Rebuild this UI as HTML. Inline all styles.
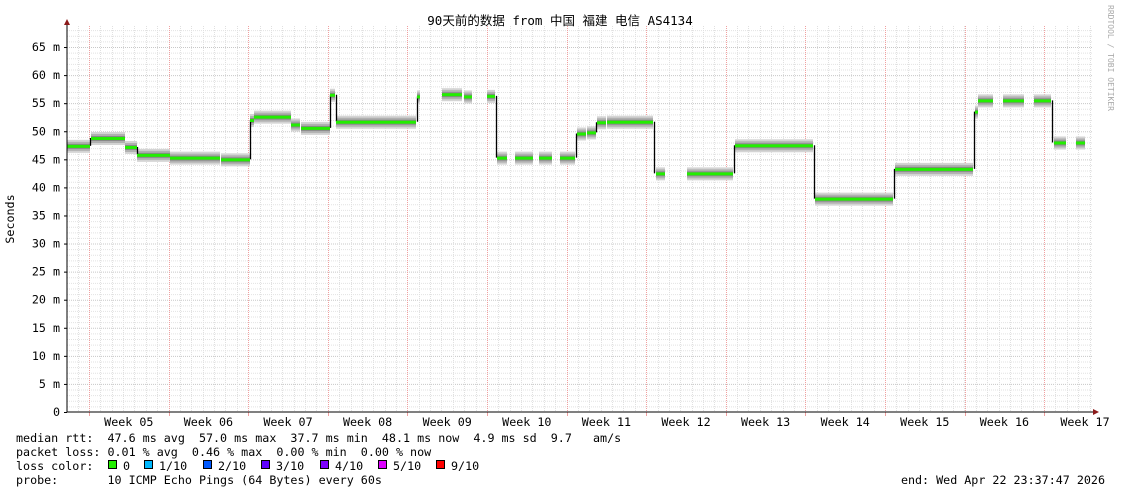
<!DOCTYPE html>
<html><head><meta charset="utf-8"><style>
html,body{margin:0;padding:0;background:#fff;width:1121px;height:494px;overflow:hidden}
svg{display:block}
text{font-family:"DejaVu Sans Mono","Liberation Mono","Noto Sans CJK SC",monospace;font-size:11.7px;fill:#000}
</style></head><body>
<svg id="g" width="1121" height="494" xmlns="http://www.w3.org/2000/svg">
<g id="grid"></g>
<g id="data"></g>
<g id="axes">
<line x1="67" y1="412" x2="1094" y2="412" stroke="#000" stroke-width="1"/>
<line x1="67" y1="24" x2="67" y2="412" stroke="#000" stroke-width="1"/>
<polygon points="64,25 70,25 67,19" fill="#8b1a1a"/>
<polygon points="1093,409 1093,415 1099,412" fill="#8b1a1a"/>
</g>
<text x="560" y="25" text-anchor="middle" style="font-size:12.5px">90天前的数据 from 中国 福建 电信 AS4134</text>
<text transform="translate(14,219) rotate(-90)" text-anchor="middle">Seconds</text>
<text transform="translate(1108,5) rotate(90)" style="font-size:8px;fill:#aaa">RRDTOOL / TOBI OETIKER</text>
<g id="ylab"></g>
<g id="xlab"></g>
<text x="16" y="442" xml:space="preserve">median rtt:  47.6 ms avg  57.0 ms max  37.7 ms min  48.1 ms now  4.9 ms sd  9.7   am/s</text>
<text x="16" y="456" xml:space="preserve">packet loss: 0.01 % avg  0.46 % max  0.00 % min  0.00 % now</text>
<text x="16" y="470" xml:space="preserve">loss color:</text>
<text x="16" y="484" xml:space="preserve">probe:       10 ICMP Echo Pings (64 Bytes) every 60s</text>
<text x="1105" y="484" text-anchor="end" xml:space="preserve">end: Wed Apr 22 23:37:47 2026</text>
<g id="leg"></g>
</svg>
<script>
var NS="http://www.w3.org/2000/svg";
function el(p,t,a,txt){var e=document.createElementNS(NS,t);for(var k in a)e.setAttribute(k,a[k]);if(txt!=null)e.textContent=txt;document.getElementById(p).appendChild(e);return e;}
function Y(v){return 412-5.615*v;}
for(var v=1;v<=68;v++){var y=Y(v);if(y<26)break;el("grid","line",{x1:67,x2:1093,y1:y+.5,y2:y+.5,stroke:v%5==0?"#c8c8c8":"#e2e2e2","stroke-dasharray":"1,1"});}
var wk=[89,168.6,248.2,327.8,407.4,487,566.6,646.2,725.8,805.4,885,964.6,1044.2];
for(var x=89-11.37*2;x<1093;x+=11.37){if(x<68)continue;el("grid","line",{x1:Math.round(x)+.5,x2:Math.round(x)+.5,y1:26,y2:412,stroke:"#e0e0e0","stroke-dasharray":"1,1"});}
wk.forEach(function(x){el("grid","line",{x1:Math.round(x)+.5,x2:Math.round(x)+.5,y1:26,y2:412,stroke:"#f0a0a0","stroke-dasharray":"1,1"});el("grid","line",{x1:Math.round(x)+.5,x2:Math.round(x)+.5,y1:412,y2:416,stroke:"#f0a0a0"});});
for(var v=0;v<=65;v+=5){el("ylab","text",{x:60,y:Y(v)+4,"text-anchor":"end","xml:space":"preserve"},v==0?"0":(v+" m"));el("ylab","line",{x1:64,x2:67,y1:Y(v)+.5,y2:Y(v)+.5,stroke:"#000"});}
var names=["05","06","07","08","09","10","11","12","13","14","15","16","17"];
for(var i=0;i<13;i++){var cx=i<12?(wk[i]+wk[i+1])/2:1085;el("xlab","text",{x:cx,y:426,"text-anchor":"middle"},"Week "+names[i]);}
var S=[[67,90,47.4],[91,125,48.8],[125,137,47.2],[137,170,45.8],[170,220,45.3],[221,250,45],[250,254,52],[254,291,52.6],[291,300,51.2],[301,330,50.6],[330,335,56.5],[336,416,51.7],[417,420,56.2],[442,455,56.6],[455,462,56.6],[464,472,56.2],[487,495,56.3],[497,507,45.3],[515,533,45.3],[539,552,45.3],[560,575,45.3],[577,586,49.6],[587,596,49.8],[597,606,51.6],[607,653,51.7],[656,665,42.5],[687,733,42.5],[735,813,47.5],[815,893,38],[895,973,43.3],[975,978,53.5],[978,993,55.5],[1003,1024,55.5],[1034,1051,55.5],[1054,1066,48],[1076,1085,48]];
var joins=[[90,47.4,48.8],[137,47.2,45.8],[250,45,52],[330,50.6,56.5],[336,56.5,51.7],[417,51.7,56.2],[496,56.3,45.3],[576,45.3,49.6],[596,49.8,51.6],[654,51.7,42.5],[734,42.5,47.5],[814,47.5,38],[894,38,43.3],[974,43.3,53.5],[1052,55.5,48]];
S.forEach(function(s){var w=s[1]-s[0],v=s[2];
el("data","rect",{x:s[0],y:Y(v)-6,width:w,height:13,fill:"#d4d4d4"});
el("data","rect",{x:s[0],y:Y(v)-4,width:w,height:9,fill:"#b0b0b0"});
el("data","rect",{x:s[0],y:Y(v)-2,width:w,height:5,fill:"#888"});});
joins.forEach(function(j){el("data","line",{x1:j[0]+.5,x2:j[0]+.5,y1:Y(j[1]),y2:Y(j[2]),stroke:"#000","stroke-width":1.3});});
S.forEach(function(s){el("data","rect",{x:s[0],y:Y(s[2])-1,width:s[1]-s[0],height:3,fill:"#22ee00"});});
var L=[[108,"#22ee00","0"],[144,"#00b8ff","1/10"],[203,"#0059ff","2/10"],[261,"#5e00ff","3/10"],[320,"#7e00ff","4/10"],[378,"#dd00ff","5/10"],[436,"#ff0000","9/10"]];
L.forEach(function(l){el("leg","rect",{x:l[0]+.5,y:460.5,width:8,height:8,fill:l[1],stroke:"#000"});el("leg","text",{x:l[0]+15,y:470},l[2]);});
</script>
</body></html>
